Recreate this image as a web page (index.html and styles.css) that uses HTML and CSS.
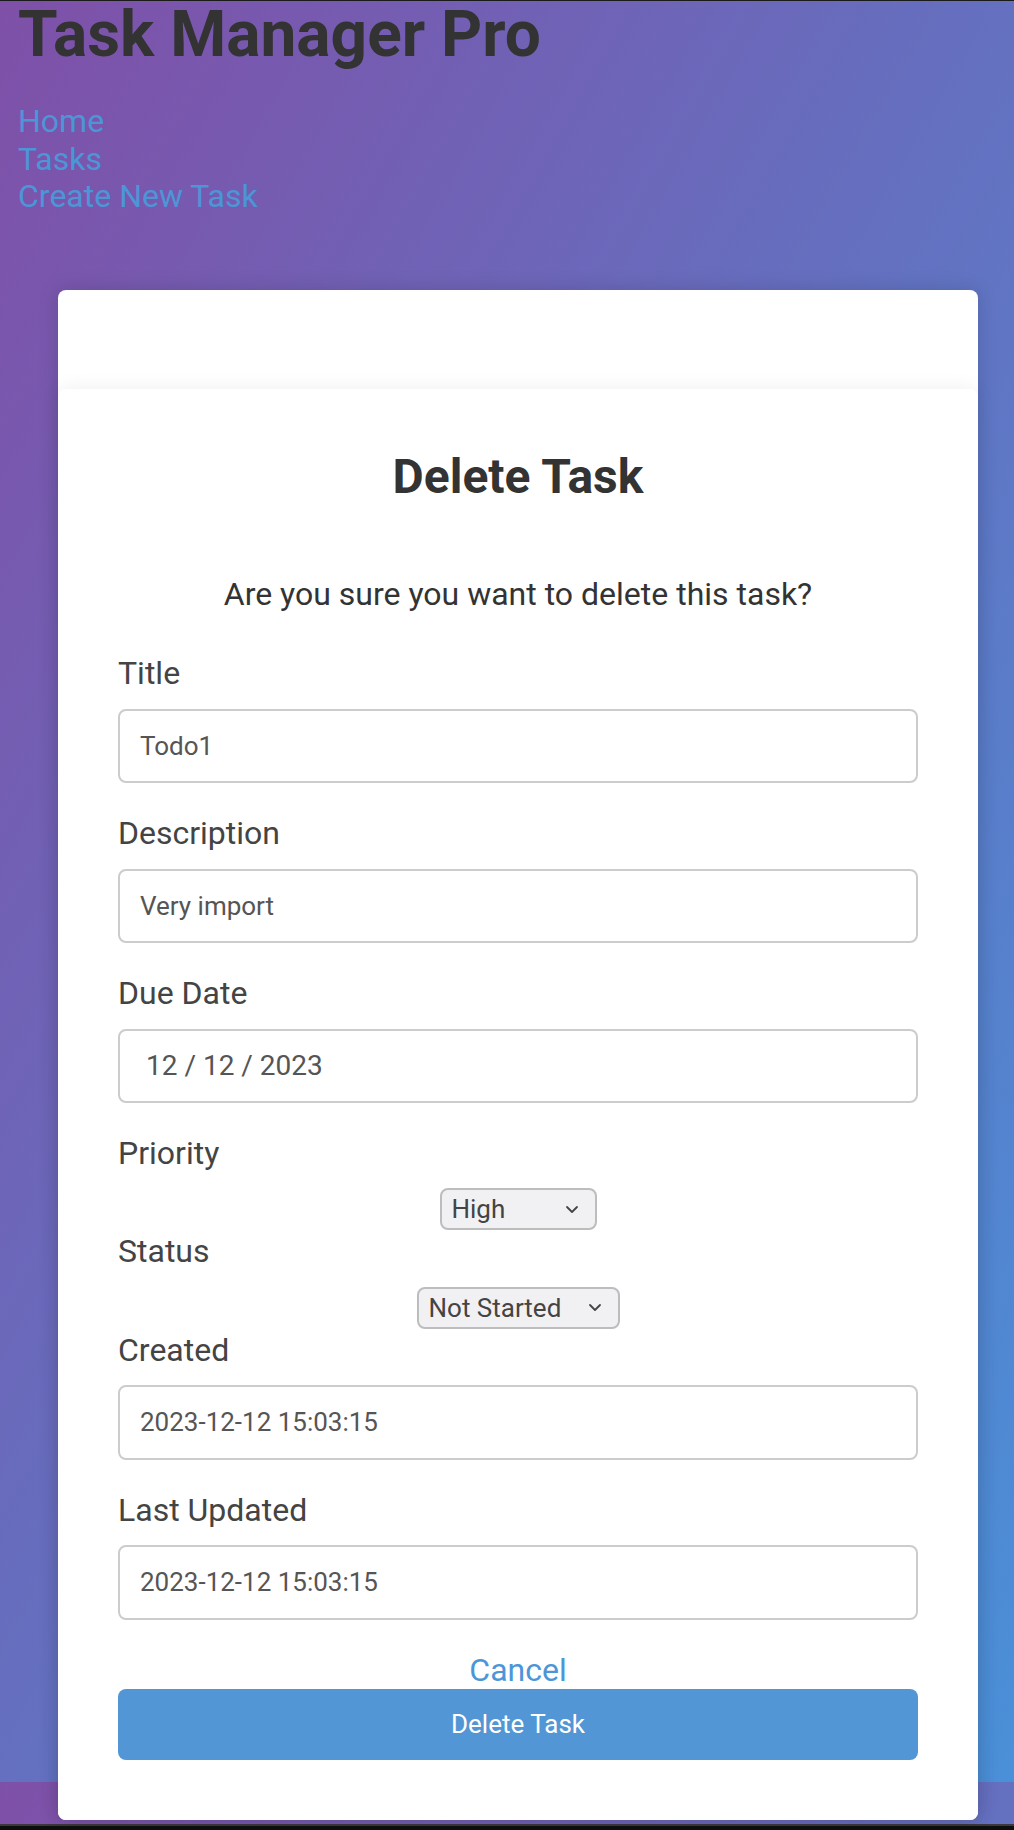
FILE: index.html
```html
<!DOCTYPE html>
<html lang="en">
<head>
<meta charset="utf-8">
<title>Task Manager Pro - Delete Task</title>
<link rel="stylesheet" href="styles.css">
</head>
<body>
<div class="page">
  <header class="site-header">
    <h1 class="brand">Task Manager Pro</h1>
    <nav>
      <ul class="nav-list">
        <li><a href="#" class="nav-link">Home</a></li>
        <li><a href="#" class="nav-link">Tasks</a></li>
        <li><a href="#" class="nav-link">Create New Task</a></li>
      </ul>
    </nav>
  </header>
  <main class="container">
    <section class="card">
      <h2 class="card-title">Delete Task</h2>
      <p class="confirm">Are you sure you want to delete this task?</p>
      <form class="task-form">
        <label class="field-label" for="title">Title</label>
        <input class="field" id="title" type="text" value="Todo1" readonly>

        <label class="field-label" for="desc">Description</label>
        <input class="field" id="desc" type="text" value="Very import" readonly>

        <label class="field-label" for="due">Due Date</label>
        <input class="field field-date" id="due" type="text" value="12 / 12 / 2023" readonly>

        <label class="field-label" for="priority">Priority</label>
        <div class="select-row">
          <span class="select-wrap select-priority">
            <select id="priority" class="select"><option>High</option></select>
            <svg class="chevron" width="14" height="9" viewBox="0 0 14 9"><path d="M2 2 L7 7 L12 2" fill="none" stroke="#444" stroke-width="1.8" stroke-linecap="round" stroke-linejoin="round"/></svg>
          </span>
        </div>

        <label class="field-label" for="status">Status</label>
        <div class="select-row">
          <span class="select-wrap select-status">
            <select id="status" class="select"><option>Not Started</option></select>
            <svg class="chevron" width="14" height="9" viewBox="0 0 14 9"><path d="M2 2 L7 7 L12 2" fill="none" stroke="#444" stroke-width="1.8" stroke-linecap="round" stroke-linejoin="round"/></svg>
          </span>
        </div>

        <label class="field-label" for="created">Created</label>
        <input class="field" id="created" type="text" value="2023-12-12 15:03:15" readonly>

        <label class="field-label" for="updated">Last Updated</label>
        <input class="field" id="updated" type="text" value="2023-12-12 15:03:15" readonly>

        <a href="#" class="cancel">Cancel</a>
        <button type="button" class="btn-delete">Delete Task</button>
      </form>
    </section>
  </main>
</div>
</body>
</html>
```
FILE: styles.css
```css
html {
  background: #0e0e0e;
}
body {
  margin: 0;
  font-family: Roboto, "Liberation Sans", Arial, sans-serif;
}
.page {
  box-sizing: border-box;
  height: 1826px;
  border-top: 1px solid #1b1b1b;
  border-bottom: 2px solid #3a3a3a;
  padding: 0 16px 0 18px;
  background-image: linear-gradient(to bottom right, #7f50a8, #4a90d8);
  background-size: 100% 1781px;
  background-repeat: repeat-y;
}
.brand {
  margin: 0 0 34px;
  font-size: 64px;
  line-height: 68px;
  font-weight: 700;
  color: #333;
}
.nav-list {
  list-style: none;
  margin: 0;
  padding: 0;
}
.nav-list li {
  font-size: 32px;
  line-height: 37.5px;
}
.nav-link {
  color: #4c96d8;
  text-decoration: none;
}
.container {
  margin: 74px 0 0 40px;
  width: 920px;
  padding-top: 99px;
  background: #fff;
  border-radius: 8px;
  box-shadow: 0 0 20px rgba(0, 0, 0, 0.15);
}
.card {
  background: #fff;
  border-radius: 8px;
  box-shadow: 0 0 20px rgba(0, 0, 0, 0.07);
  padding: 60px;
}
.card-title {
  margin: 0 0 71px;
  font-size: 48px;
  line-height: 56.25px;
  font-weight: 700;
  text-align: center;
  color: #333;
}
.confirm {
  margin: 0 0 42px;
  font-size: 32px;
  line-height: 37.5px;
  text-align: center;
  color: #333;
}
.task-form {
  display: flex;
  flex-direction: column;
}
.field-label {
  font-size: 32px;
  line-height: 37.5px;
  color: #444;
  margin-bottom: 16px;
}
.field {
  box-sizing: border-box;
  width: 100%;
  margin: 0 0 32px;
  padding: 20px;
  border: 2px solid #ccc;
  border-radius: 8px;
  font-family: Roboto, "Liberation Sans", Arial, sans-serif;
  font-size: 26px;
  line-height: 30.4px;
  color: #555;
  background: #fff;
  outline: none;
}
.field-date {
  padding-left: 26px;
  font-size: 28px;
  font-variant-numeric: tabular-nums;
}
.select-row {
  display: flex;
  justify-content: center;
  margin-bottom: 3px;
}
.select-wrap {
  box-sizing: border-box;
  display: inline-flex;
  align-items: center;
  height: 42px;
  border: 2px solid #bdbdbd;
  border-radius: 8px;
  background: #f1f1f4;
  padding: 0 16px 0 10px;
  justify-content: space-between;
}
.select-priority {
  width: 157px;
}
.select-status {
  width: 203px;
}
.select {
  appearance: none;
  -webkit-appearance: none;
  border: none;
  background: transparent;
  padding: 0;
  margin: 0;
  font-family: Roboto, "Liberation Sans", Arial, sans-serif;
  font-size: 26px;
  color: #444;
  outline: none;
}
.chevron {
  flex: none;
}
.cancel {
  display: block;
  text-align: center;
  font-size: 32px;
  line-height: 37.5px;
  color: #4c96d8;
  text-decoration: none;
}
.btn-delete {
  width: 100%;
  padding: 20px;
  border: none;
  border-radius: 8px;
  background: #5296d5;
  color: #fff;
  font-family: Roboto, "Liberation Sans", Arial, sans-serif;
  font-size: 26px;
  line-height: 31px;
}
```
